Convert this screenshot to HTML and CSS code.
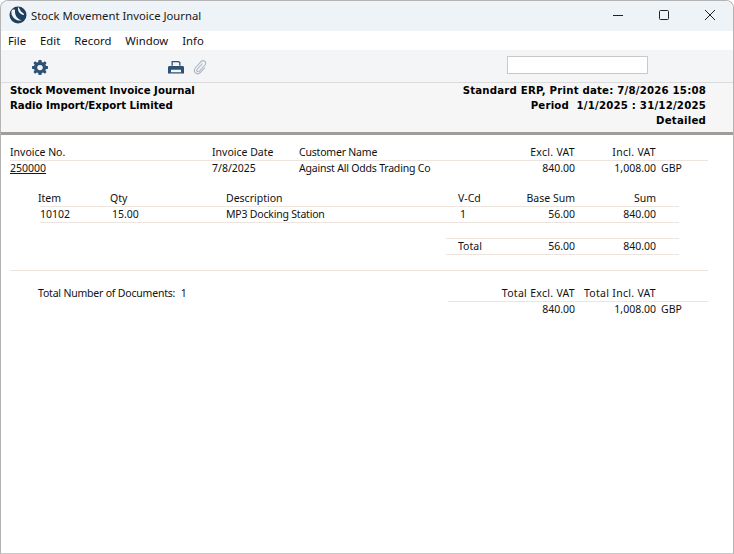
FILE: index.html
```html
<!DOCTYPE html>
<html lang="en">
<head>
  <meta charset="UTF-8" />
  <title>Stock Movement Invoice Journal</title>
  <link rel="stylesheet" href="styles.css">
</head>
<body>
  <div class="window">
    <div class="titlebar">
      <svg class="logo" width="18" height="18" viewBox="0 0 18 18">
        <circle cx="9" cy="9" r="8.5" fill="#1f3f5f"/>
        <path d="M2.5 5C1.5 10 6 15.5 13 14.5C9 13.5 5.5 10 6 4C5 3.2 3.5 3.5 2.5 5Z" fill="#f2f5f8"/>
        <path d="M9 1C8.5 5 10.5 8.5 15 9C15.5 7.5 13 6.5 12 5.5C11 4.5 11 2.5 9 1Z" fill="#f2f5f8"/>
      </svg>
      <span class="title">Stock Movement Invoice Journal</span>
      <div class="winbtns">
        <svg width="12" height="12" viewBox="0 0 12 12"><path d="M1 6.5H11" stroke="#222" fill="none"/></svg>
        <svg width="12" height="12" viewBox="0 0 12 12"><rect x="1.5" y="1.5" width="9" height="9" rx="1" stroke="#222" fill="none"/></svg>
        <svg width="12" height="12" viewBox="0 0 12 12"><path d="M1 1L11 11M11 1L1 11" stroke="#222" fill="none"/></svg>
      </div>
    </div>

    <div class="menubar">
      <span>File</span>
      <span>Edit</span>
      <span>Record</span>
      <span>Window</span>
      <span>Info</span>
    </div>

    <div class="toolbar">
      <svg class="gear" width="16" height="15" viewBox="0 0 16 16" preserveAspectRatio="none">
        <path fill="#2f5175" fill-rule="evenodd" d="M6.6 0H9.4L9.8 2.1L11.1 2.6L12.9 1.4L14.6 3.1L13.4 4.9L13.9 6.2L16 6.6V9.4L13.9 9.8L13.4 11.1L14.6 12.9L12.9 14.6L11.1 13.4L9.8 13.9L9.4 16H6.6L6.2 13.9L4.9 13.4L3.1 14.6L1.4 12.9L2.6 11.1L2.1 9.8L0 9.4V6.6L2.1 6.2L2.6 4.9L1.4 3.1L3.1 1.4L4.9 2.6L6.2 2.1ZM8 5.2A2.8 2.8 0 1 0 8 10.8A2.8 2.8 0 1 0 8 5.2Z"/>
      </svg>
      <svg class="printer" width="16" height="13" viewBox="0 0 16 14" preserveAspectRatio="none">
        <path fill="#2f5175" d="M3.5 0H11L12.5 1.5V5H11.2V2.2L10.4 1.3H4.8V5H3.5Z"/>
        <path fill="#2f5175" fill-rule="evenodd" d="M1.5 5.5H14.5Q16 5.5 16 7V13.5H0V7Q0 5.5 1.5 5.5ZM3 9.5V12H13V9.5Z"/>
      </svg>
      <svg class="clip" width="14" height="16" viewBox="0 0 14 16">
        <path fill="none" stroke="#aab6c3" stroke-width="1.1" d="M9.5 4.5L4 10.5C3 12 5 13.5 6.2 12.3L12 6C14 3.5 10.8 0 8.3 2.5L2.3 9C-0.5 12.5 4 17 7.2 13.7L12 8.5"/>
      </svg>
      <input class="search" type="text">
    </div>

    <div class="report-head">
      <div class="head-left">
        <div>Stock Movement Invoice Journal</div>
        <div>Radio Import/Export Limited</div>
      </div>
      <div class="head-right">
        <div>Standard ERP, Print date: 7/8/2026 15:08</div>
        <div>Period &nbsp;1/1/2025 : 31/12/2025</div>
        <div>Detailed</div>
      </div>
    </div>

    <div class="report">
      <div class="main-row ruled">
        <span>Invoice No.</span>
        <span>Invoice Date</span>
        <span class="tight">Customer Name</span>
        <span class="num vat">Excl. VAT</span>
        <span class="num vat">Incl. VAT</span>
      </div>
      <div class="main-row">
        <a class="link" href="#">250000</a>
        <span>7/8/2025</span>
        <span class="tight">Against All Odds Trading Co</span>
        <span class="num">840.00</span>
        <span class="num">1,008.00</span>
        <span class="cur">GBP</span>
      </div>

      <div class="sub-row ruled first">
        <span class="lab">Item</span>
        <span class="lab">Qty</span>
        <span>Description</span>
        <span class="lab">V-Cd</span>
        <span class="num">Base Sum</span>
        <span class="num">Sum</span>
      </div>
      <div class="sub-row ruled">
        <span>10102</span>
        <span>15.00</span>
        <span class="tight">MP3 Docking Station</span>
        <span>1</span>
        <span class="num">56.00</span>
        <span class="num">840.00</span>
      </div>
      <div class="total-row ruled">
        <span>Total</span>
        <span class="num">56.00</span>
        <span class="num">840.00</span>
      </div>
      <div class="spacer ruled"></div>

      <div class="foot-row">
        <div class="foot-count"><span class="tight">Total Number of Documents:</span> &nbsp;1</div>
        <div class="foot-sums ruled">
          <span class="num vat">Total Excl. VAT</span>
          <span class="num vat">Total Incl. VAT</span>
        </div>
      </div>
      <div class="foot-sums foot-values">
        <span class="num">840.00</span>
        <span class="num">1,008.00</span>
        <span class="cur">GBP</span>
      </div>
    </div>
  </div>
</body>
</html>
```

FILE: styles.css
```css
* {
  box-sizing: border-box;
}
html, body {
  height: 100%;
}
body {
  margin: 0;
  background: #fff;
  font-family: "Noto Sans", "Open Sans", sans-serif;
  font-size: 10.5px;
  color: #111;
}
.window {
  height: 554px;
  border: 1px solid #b4b4b4;
  border-bottom-color: #c8c8c8;
  border-radius: 8px 8px 0 0;
  overflow: hidden;
  background: #fff;
}
.titlebar {
  display: flex;
  align-items: center;
  height: 30px;
  padding: 0 0 2px 8px;
  background: #eef3f8;
}
.title {
  margin-left: 4px;
  font-size: 11.3px;
  color: #1a1a1a;
}
.winbtns {
  display: flex;
  gap: 34px;
  margin-left: auto;
  margin-right: 17px;
}
.menubar {
  display: flex;
  gap: 14px;
  align-items: center;
  height: 19px;
  padding-left: 7px;
  background: #fff;
  font-size: 11.3px;
}
.toolbar {
  display: flex;
  align-items: center;
  height: 33px;
  padding-left: 31px;
  background: #f4f5f7;
  border-bottom: 1px solid #dcdcdc;
}
.gear,
.printer,
.clip {
  margin-top: 2px;
}
.printer {
  margin-left: 120px;
}
.clip {
  margin-left: 9px;
}
.search {
  width: 141px;
  height: 18px;
  margin: 0 0 2px 300px;
  border: 1px solid #c9c9c9;
  background: #fff;
}
.report-head {
  display: flex;
  justify-content: space-between;
  height: 52px;
  padding: 0 27px 0 9px;
  background: #f6f6f6;
  border-bottom: 3px solid #a09c9a;
  font-family: "DejaVu Sans", sans-serif;
  font-size: 10.2px;
  font-weight: 700;
  line-height: 15px;
  color: #000;
}
.head-right {
  text-align: right;
  letter-spacing: 0.2px;
}
.report {
  padding: 10px 0 0 9px;
  line-height: 14px;
}
.ruled {
  border-bottom: 1px solid #ece4df;
}
.main-row {
  display: grid;
  grid-template-columns: 202px 87px 196px 80px 81px 52px;
  width: 698px;
  height: 16px;
}
.num {
  text-align: right;
}
.vat {
  letter-spacing: 0.3px;
}
.tight {
  letter-spacing: -0.2px;
}
.cur {
  padding-left: 5px;
}
.link {
  color: #111;
  text-decoration-color: #0000c8;
}
.sub-row {
  display: grid;
  grid-template-columns: 72px 114px 234px 55px 60px 81px 23px;
  width: 639px;
  height: 16px;
  margin-left: 30px;
}
.sub-row.first {
  margin-top: 14px;
}
.lab {
  margin-left: -2px;
}
.total-row {
  display: grid;
  grid-template-columns: 57px 60px 81px 23px;
  width: 233px;
  height: 17px;
  margin: 15px 0 0 436px;
  padding-left: 12px;
  border-top: 1px solid #ece4df;
}
.spacer {
  width: 698px;
  height: 16px;
}
.foot-row {
  display: flex;
  margin-top: 15px;
}
.foot-count {
  width: 438px;
  padding-left: 28px;
}
.foot-sums {
  display: grid;
  grid-template-columns: 127px 81px 52px;
  width: 260px;
  height: 16px;
}
.foot-values {
  margin-left: 438px;
}
```
